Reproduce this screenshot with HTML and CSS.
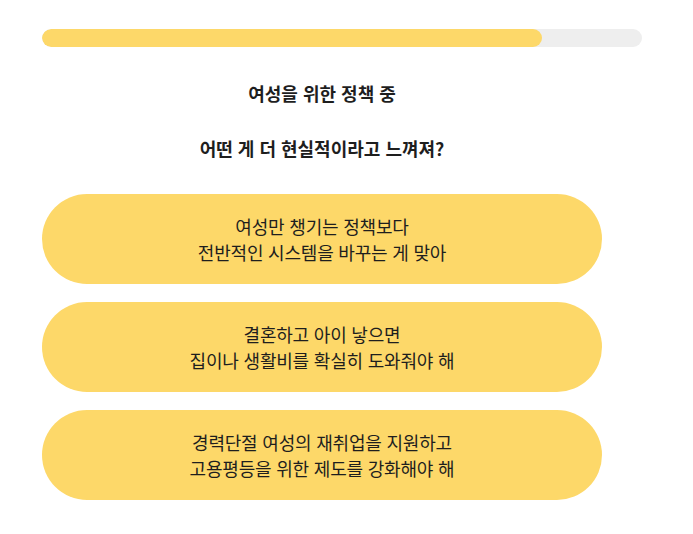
FILE: index.html
```html
<!DOCTYPE html>
<html lang="ko">
<head>
    <meta charset="UTF-8">
    <meta name="viewport" content="width=device-width, initial-scale=1.0">
    <title>정책 설문</title>
    <link rel="stylesheet" href="styles.css">
</head>
<body>
    <div class="page">
        <div class="progress">
            <div class="progress-fill" style="width: 83.3%"></div>
        </div>

        <div class="survey">
            <div class="question">
                <p>여성을 위한 정책 중</p>
                <p>어떤 게 더 현실적이라고 느껴져?</p>
            </div>

            <div class="answers">
                <button class="answer">여성만 챙기는 정책보다<br>전반적인 시스템을 바꾸는 게 맞아</button>
                <button class="answer">결혼하고 아이 낳으면<br>집이나 생활비를 확실히 도와줘야 해</button>
                <button class="answer">경력단절 여성의 재취업을 지원하고<br>고용평등을 위한 제도를 강화해야 해</button>
            </div>
        </div>
    </div>
</body>
</html>
```

FILE: styles.css
```css
* {
    margin: 0;
    padding: 0;
    box-sizing: border-box;
}

body {
    font-family: "Noto Sans CJK KR", "Noto Sans", sans-serif;
    background: #fff;
    color: #1e1e1e;
}

.page {
    padding: 29px 0 0 42px;
}

.progress {
    width: 600px;
    height: 18px;
    border-radius: 9px;
    background-color: #eeeeee;
    overflow: hidden;
}

.progress-fill {
    height: 100%;
    border-radius: 9px;
    background-color: #fdd869;
}

.survey {
    width: 560px;
}

.question {
    margin-top: 33px;
    text-align: center;
    font-size: 18px;
    font-weight: 700;
    line-height: 26px;
}

.question p + p {
    margin-top: 29px;
}

.answers {
    margin-top: 33px;
    display: flex;
    flex-direction: column;
    gap: 18px;
}

.answer {
    height: 90px;
    border: none;
    border-radius: 45px;
    background-color: #fdd869;
    color: #1e1e1e;
    font-family: inherit;
    font-size: 18px;
    line-height: 26px;
    letter-spacing: -0.2px;
    text-align: center;
    cursor: pointer;
}
```
